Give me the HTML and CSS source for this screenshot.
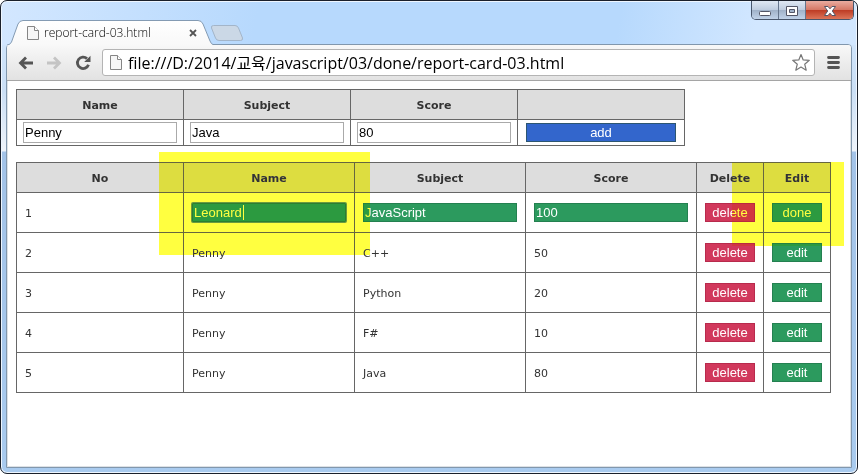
FILE: index.html
```html
<!DOCTYPE html>
<html lang="en">
<head>
<meta charset="utf-8">
<title>report-card-03.html</title>
<link rel="stylesheet" href="styles.css">
</head>
<body>
<div class="window">
  <header class="titlebar">
    <div class="tab">
      <svg class="tab-shape" width="206" height="26" viewBox="0 0 206 26" aria-hidden="true">
        <defs><linearGradient id="tabfill" x1="0" y1="0" x2="0" y2="1"><stop offset="0" stop-color="#fff"/><stop offset="1" stop-color="#f8f8f8"/></linearGradient></defs>
        <path d="M0 26V25Q3 25 4.500 22L11 4Q12.500 .5 16 .5H191Q194.500 .5 196 4L203 21Q204.500 24.500 206 24.500V26Z" fill="url(#tabfill)"/>
        <path d="M0 25Q3 25 4.500 22L11 4Q12.500 .5 16 .5H191Q194.500 .5 196 4L203 21Q204.500 24.500 206 24.500" fill="none" stroke="#849bb3"/>
      </svg>
      <svg class="doc" width="12" height="14" viewBox="0 0 12 14" aria-hidden="true"><path d="M.5 .5H7.500L11.500 4.500V13.500H.5Z" fill="#f6f6f6" stroke="#858585"/><path d="M7.500 .5V4.500H11.500" fill="#fff" stroke="#858585"/></svg>
      <span class="tab-title">report-card-03.html</span>
      <button class="tab-close" type="button" aria-label="Close tab"><svg width="8" height="8" viewBox="0 0 8 8"><path d="M1 1L7 7M7 1L1 7" stroke="#555" stroke-width="1.800"/></svg></button>
    </div>
    <button class="new-tab" type="button" aria-label="New tab"><svg width="34" height="18" viewBox="0 0 34 18"><path d="M3.500 1.500H25Q27.500 1.500 28.500 4L32.500 14Q33 16.500 30.500 16.500H9Q6.500 16.500 5.500 14L1.500 4Q.8 1.500 3.500 1.500Z" fill="#cbd8e6" stroke="#a3b5c9"/></svg></button>
    <div class="controls">
      <button class="control" type="button" aria-label="Minimize"><svg width="14" height="13" viewBox="0 0 14 13"><rect x="1.500" y="7.500" width="11" height="4" rx="1" fill="#fff" stroke="#535666"/></svg></button>
      <button class="control" type="button" aria-label="Maximize"><svg width="14" height="13" viewBox="0 0 14 13"><path fill-rule="evenodd" d="M1.500 2.500H12.500V11.500H1.500ZM4.500 5.500V8.500H9.500V5.500Z" fill="#fff" stroke="#535666"/></svg></button>
      <button class="control close" type="button" aria-label="Close"><svg width="14" height="13" viewBox="0 0 14 13"><path d="M1.500 2.500H5L7 4.800L9 2.500H12.500L9.300 7L12.500 11.500H9L7 9.200L5 11.500H1.500L4.700 7Z" fill="#fff" stroke="#535666"/></svg></button>
    </div>
  </header>
  <main class="client">
    <nav class="toolbar">
      <button class="tool" type="button" aria-label="Back"><svg width="16" height="14" viewBox="0 0 16 14"><path d="M15 7H3M8 1.500L2.500 7L8 12.500" fill="none" stroke="#555" stroke-width="2.800"/></svg></button>
      <button class="tool" type="button" aria-label="Forward"><svg width="16" height="14" viewBox="0 0 16 14"><path d="M1 7H13M8 1.500L13.500 7L8 12.500" fill="none" stroke="#c4c4c4" stroke-width="2.800"/></svg></button>
      <button class="tool" type="button" aria-label="Reload"><svg width="16" height="16" viewBox="0 0 16 16"><path d="M12 3.600A5.700 5.700 0 1 0 13.500 9.800" fill="none" stroke="#555" stroke-width="2.800"/><path d="M15.500 .8V7H9.200Z" fill="#555"/></svg></button>
      <div class="omnibox">
        <svg width="12" height="15" viewBox="0 0 12 15" aria-hidden="true"><path d="M.5 .5H7.500L11.500 4.500V14.500H.5Z" fill="#f6f6f6" stroke="#858585"/><path d="M7.500 .5V4.500H11.500" fill="#fff" stroke="#858585"/></svg>
        <input class="url" type="text" aria-label="Address" value="file:///D:/2014/교육/javascript/03/done/report-card-03.html">
        <button class="star" type="button" aria-label="Bookmark"><svg width="20" height="19" viewBox="0 0 20 19"><path d="M10 1.500L12.200 6.900L18.300 7.300L13.700 11.200L15.200 17.200L10 14L4.800 17.200L6.300 11.200L1.700 7.300L7.800 6.900Z" fill="#fff" stroke="#777" stroke-width="1.200" stroke-linejoin="round"/></svg></button>
      </div>
      <button class="menu" type="button" aria-label="Menu"><svg width="14" height="13" viewBox="0 0 14 13"><path d="M1.500 1.500H11.500M1.500 6.500H11.500M1.500 11.500H11.500" stroke="#555" stroke-width="2.800" stroke-linecap="round"/></svg></button>
    </nav>
    <section class="page">
      <table class="entry">
        <thead><tr><th>Name</th><th>Subject</th><th>Score</th><th></th></tr></thead>
        <tbody><tr>
          <td><input class="field" type="text" aria-label="Name" value="Penny"></td>
          <td><input class="field" type="text" aria-label="Subject" value="Java"></td>
          <td><input class="field" type="text" aria-label="Score" value="80"></td>
          <td><button class="btn add" type="button">add</button></td>
        </tr></tbody>
      </table>
      <div class="records-wrap">
        <table class="records">
          <colgroup><col class="c-no"><col class="c-text"><col class="c-text"><col class="c-text"><col class="c-action"><col class="c-action"></colgroup>
          <thead><tr><th>No</th><th>Name</th><th>Subject</th><th>Score</th><th>Delete</th><th>Edit</th></tr></thead>
          <tbody>
            <tr><td>1</td><td><div class="active-cell"><input class="field edit-field active" type="text" aria-label="Edit name" value="Leonard"><span class="caret"></span></div></td><td><input class="field edit-field" type="text" aria-label="Edit subject" value="JavaScript"></td><td><input class="field edit-field" type="text" aria-label="Edit score" value="100"></td><td><button class="btn delete" type="button">delete</button></td><td><button class="btn edit" type="button">done</button></td></tr>
            <tr><td>2</td><td>Penny</td><td>C++</td><td>50</td><td><button class="btn delete" type="button">delete</button></td><td><button class="btn edit" type="button">edit</button></td></tr>
            <tr><td>3</td><td>Penny</td><td>Python</td><td>20</td><td><button class="btn delete" type="button">delete</button></td><td><button class="btn edit" type="button">edit</button></td></tr>
            <tr><td>4</td><td>Penny</td><td>F#</td><td>10</td><td><button class="btn delete" type="button">delete</button></td><td><button class="btn edit" type="button">edit</button></td></tr>
            <tr><td>5</td><td>Penny</td><td>Java</td><td>80</td><td><button class="btn delete" type="button">delete</button></td><td><button class="btn edit" type="button">edit</button></td></tr>
          </tbody>
        </table>
        <div class="marker marker-name"></div>
        <div class="marker marker-edit"></div>
      </div>
    </section>
  </main>
</div>
</body>
</html>
```
FILE: styles.css
```css
* { box-sizing: border-box; }
body { margin: 0; background: #fff; font-family: "DejaVu Sans", Verdana, sans-serif; font-size: 11px; color: #333; }
button { margin: 0; padding: 0; border: 0; background: none; }
svg { display: block; }

.window {
  display: flex; flex-direction: column; min-height: 100vh;
  border: 1px solid #1a202b; border-radius: 7px;
  box-shadow: inset 0 0 0 1px #eef6ff;
  background:
    linear-gradient(100deg, #d3e7ff 0, #b7d9fd 30%, #b7d9fd 72%, #d2e7ff 88%) 0 0 / 100% 44px no-repeat,
    linear-gradient(#cfe4fb 44px, #cbdff5 90px, #eef3fa 150px, #a3c3e8 151px, #a9cbef 100%);
}

.titlebar { display: flex; align-items: flex-end; height: 43px; padding: 0 3px 0 6px; }
.tab { position: relative; z-index: 1; display: flex; align-items: center; width: 206px; height: 26px; margin-bottom: -2px; padding: 0 16px 0 20px; }
.tab-shape { position: absolute; inset: 0; }
.doc, .tab-title, .tab-close { position: relative; }
.tab-title { flex: 1; margin-left: 5px; font: 300 12px/16px "Open Sans", "Noto Sans", sans-serif; color: #000; white-space: nowrap; }
.new-tab { margin: 0 0 2px -3px; }
.controls { display: flex; align-self: flex-start; margin-left: auto; height: 19px; border: 1px solid #48566b; border-top: 0; border-radius: 0 0 5px 5px; overflow: hidden; }
.control { display: flex; align-items: center; justify-content: center; width: 27px; border-right: 1px solid #65758c; background: linear-gradient(#dfe8f3, #bfcddf 48%, #9fb1c8 50%, #c0d2e8); }
.control.close { width: 47px; border-right: 0; background: linear-gradient(#e9aca0, #d57866 48%, #bd3a23 50%, #dc7559); }

.client { flex: 1; display: flex; flex-direction: column; margin: 0 5px 5px; border: 1px solid #8197ad; border-radius: 4px 4px 0 0; background: #fff; box-shadow: inset 0 0 0 1px #dde1e5; }
.toolbar { display: flex; align-items: center; height: 36px; padding: 0 10px 0 6px; border-bottom: 1px solid #a5a5a5; border-radius: 3px 3px 0 0; background: linear-gradient(#f8f8f8, #e2e2e2); }
.tool { display: flex; justify-content: center; width: 29px; flex: none; }
.tool:first-child { width: 26px; }
.omnibox { flex: 1; display: flex; align-items: center; height: 27px; margin-left: 5px; padding: 0 3px 0 7px; border: 1px solid #b4b4b4; border-radius: 3px; background: #fff; }
.url { flex: 1; min-width: 0; margin-left: 6px; padding: 0; border: 0; outline: 0; background: none; font: 16px/24px "Open Sans", "Noto Sans", "Noto Sans CJK KR", sans-serif; color: #000; }
.menu { margin-left: 12px; }

.page { flex: 1; padding: 8px 9px; }
table { border-collapse: collapse; table-layout: fixed; }
th, td { border: 1px solid #666; }
th { height: 30px; padding: 1px 0 0; background: #ddd; font-size: 11px; font-weight: bold; text-align: center; }
.field { display: block; width: 154px; height: 21px; margin: 0; padding: 1px; border: 1px solid #aaa; outline: 0; background: #fff; color: #000; font: 13px/15px "Liberation Sans", Arial, sans-serif; }
.btn { display: block; width: 50px; height: 19px; border: 1px solid; color: #fff; font: 13px/15px "Liberation Sans", Arial, sans-serif; text-align: center; }

.entry { width: 669px; margin-bottom: 16px; }
.entry td { height: 26px; padding: 0; }
.entry .field, .entry .btn { margin: 0 auto; }
.add { background: #36c; border-color: #2c5672; }
.entry .add { width: 150px; }

.records-wrap { position: relative; }
.records { width: 815px; }
.c-no { width: 167px; }
.c-text { width: 171px; }
.c-action { width: 67px; }
.records td { height: 40px; padding: 1px 8px 0; }
.records td:has(.field), .records td:has(.btn) { padding-top: 0; }
.edit-field { height: 19px; padding: 0 1px; background: #2c9a5e; border-color: #248050; color: #fff; }
.active-cell { position: relative; }
.edit-field.active { border-color: #2c7f30; box-shadow: 0 0 0 1px #6b9a40; border-radius: 1px; }
.caret { position: absolute; left: 51px; top: 2px; width: 1px; height: 15px; background: #fff; }
.delete { background: #d1385c; border-color: #b82a4c; }
.edit { background: #2c9a5e; border-color: #248050; }

.marker { position: absolute; background: #ffff40; mix-blend-mode: darken; pointer-events: none; }
.marker-name { left: 143px; top: -10px; width: 211px; height: 103px; }
.marker-edit { left: 716px; top: 0; width: 112px; height: 84px; }
```
